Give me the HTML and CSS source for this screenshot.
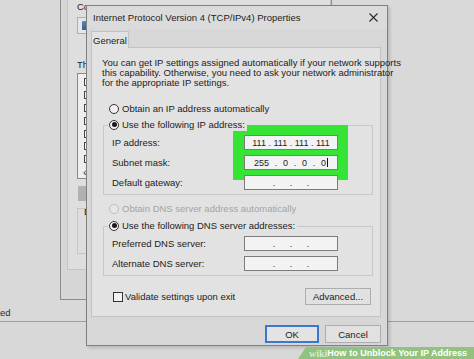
FILE: index.html
```html
<!DOCTYPE html>
<html>
<head>
<meta charset="utf-8">
<link rel="stylesheet" href="styles.css">
</head>
<body>
<div class="desktop">
  <div class="win-back">
    <div class="back-status"><span>ed</span></div>
  </div>

  <div class="win-eth">
    <div class="eth-panel">
      <div class="eth-label"><span>Co</span></div>
      <div class="eth-adapter"><span class="adapter-icon"></span></div>
      <div class="eth-label eth-label-items"><span>Th</span></div>
      <div class="eth-list">
        <div class="eth-row"><span class="mini-check on"></span></div>
        <div class="eth-row"><span class="mini-check on"></span></div>
        <div class="eth-row"><span class="mini-check on"></span></div>
        <div class="eth-row"><span class="mini-check on"></span></div>
        <div class="eth-row"><span class="mini-check"></span></div>
        <div class="eth-row"><span class="mini-check on"></span></div>
        <div class="eth-row"><span class="mini-check on"></span></div>
        <div class="eth-row eth-scroll">&lsaquo;</div>
      </div>
      <div class="eth-btn"></div>
      <div class="eth-desc"><span class="eth-desc-label">D</span></div>
    </div>
  </div>

  <div class="dialog">
    <div class="titlebar">
      <span class="title">Internet Protocol Version 4 (TCP/IPv4) Properties</span>
      <svg class="close" width="9" height="9" viewBox="0 0 9 9"><path d="M0.5 0.5L8.5 8.5M8.5 0.5L0.5 8.5" stroke="#2b2b2b" stroke-width="1.1" fill="none"/></svg>
    </div>
    <div class="dialog-body">
      <div class="tabs"><div class="tab">General</div></div>
      <div class="panel">
        <p class="intro">You can get IP settings assigned automatically if your network supports<br>this capability. Otherwise, you need to ask your network administrator<br>for the appropriate IP settings.</p>

        <div class="radio radio-first"><span class="circle"></span><span>Obtain an IP address automatically</span></div>
        <div class="radio radio-label"><span class="circle checked"></span><span>Use the following IP address:</span></div>
        <div class="group group-ip">
          <div class="highlight"></div>
          <div class="field"><span>IP address:</span><div class="ipbox front"><span>111</span><span>.</span><span>111</span><span>.</span><span>111</span><span>.</span><span>111</span></div></div>
          <div class="field"><span>Subnet mask:</span><div class="ipbox front"><span>255</span><span>.</span><span>0</span><span>.</span><span>0</span><span>.</span><span>0<i class="caret"></i></span></div></div>
          <div class="field"><span>Default gateway:</span><div class="ipbox"><span></span><span>.</span><span>.</span><span>.</span><span></span></div></div>
        </div>

        <div class="radio radio-disabled"><span class="circle"></span><span>Obtain DNS server address automatically</span></div>
        <div class="radio radio-label radio-dns"><span class="circle checked"></span><span>Use the following DNS server addresses:</span></div>
        <div class="group group-dns">
          <div class="field"><span>Preferred DNS server:</span><div class="ipbox"><span></span><span>.</span><span>.</span><span>.</span><span></span></div></div>
          <div class="field"><span>Alternate DNS server:</span><div class="ipbox"><span></span><span>.</span><span>.</span><span>.</span><span></span></div></div>
        </div>

        <div class="panel-foot">
          <div class="check-row"><span class="checkbox"></span><span>Validate settings upon exit</span></div>
          <div class="btn btn-adv">Advanced...</div>
        </div>
      </div>
      <div class="dialog-foot">
        <div class="btn btn-ok">OK</div>
        <div class="btn btn-cancel">Cancel</div>
      </div>
    </div>
  </div>

  <div class="wiki-banner"><span class="wiki">wiki</span><span class="how">How</span><span class="rest">to Unblock Your IP Address</span></div>
</div>
</body>
</html>
```
FILE: styles.css
```css
* { box-sizing: border-box; }

body {
  margin: 0;
  width: 474px;
  height: 359px;
  overflow: hidden;
  background: #d8d8d8;
  font-family: "Liberation Sans Narrow", "Liberation Sans", Arial, sans-serif;
  font-size: 9.5px;
  color: #1c1c1c;
}

.desktop {
  position: relative;
  width: 474px;
  height: 359px;
  overflow: hidden;
  background: #d8d8d8;
}

/* background window spanning the screen */
.win-back {
  position: absolute;
  left: -2px;
  top: -2px;
  width: 478px;
  height: 324px;
  border-bottom: 1px solid #9e9e9e;
  background: #d9d9d9;
  display: flex;
  flex-direction: column;
  justify-content: flex-end;
  padding: 0 0 2px 2px;
}

.back-status {
  height: 14px;
  display: flex;
  align-items: center;
  white-space: nowrap;
  color: #2a2a2a;
}

/* ethernet properties window */
.win-eth {
  position: absolute;
  left: 60px;
  top: -12px;
  width: 272px;
  height: 312px;
  border: 1px solid #8c8c8c;
  background: #d6d6d6;
  padding: 0 0 29px 6px;
}

.eth-panel {
  height: 100%;
  border: 1px solid #c4c4c4;
  border-top: none;
  background: #dedede;
  padding: 13px 0 0 9px;
  display: flex;
  flex-direction: column;
  align-items: flex-start;
}

.eth-label {
  line-height: 10px;
  white-space: nowrap;
}

.eth-label-items { margin-top: 26px; }

.eth-adapter {
  margin-top: 5px;
  width: 60px;
  height: 17px;
  border: 1px solid #b0b0b0;
  background: #e6e6e6;
  padding: 3px 0 0 4px;
}

.adapter-icon {
  display: block;
  width: 8px;
  height: 9px;
  background: linear-gradient(#5c86b8, #2f5f96);
  border-radius: 1px;
}

.eth-list {
  margin-top: 3px;
  width: 60px;
  height: 106px;
  border: 1px solid #8a8a8a;
  background: #eeeeee;
  padding: 2px 0 0 6px;
}

.eth-row {
  height: 12.8px;
  display: flex;
  align-items: center;
}

.mini-check {
  width: 8px;
  height: 8px;
  border: 1px solid #444;
  background: #f6f6f6;
  display: flex;
  align-items: center;
  justify-content: center;
}

.mini-check.on::after {
  content: "";
  width: 3px;
  height: 3px;
  background: #222;
}

.eth-scroll {
  font-size: 11px;
  color: #333;
  margin-left: -1px;
}

.eth-btn {
  margin-top: 7px;
  margin-left: 1px;
  width: 60px;
  height: 15px;
  background: #b1b1b1;
}

.eth-desc {
  margin-top: 7px;
  width: 60px;
  height: 46px;
  border: 1px solid #c6c6c6;
}

.eth-desc-label {
  display: block;
  margin: -2px 0 0 6px;
  line-height: 9px;
}

/* main dialog */
.dialog {
  position: absolute;
  left: 86px;
  top: 5px;
  width: 302px;
  height: 341px;
  border: 1px solid #808080;
  background: #d7d7d7;
  box-shadow: 2px 2px 3px rgba(0, 0, 0, 0.15);
  display: flex;
  flex-direction: column;
}

.titlebar {
  height: 23px;
  background: #dbdbdb;
  display: flex;
  align-items: center;
  justify-content: space-between;
  padding: 0 9px 0 6px;
  white-space: nowrap;
}

.close { display: block; }

.dialog-body {
  padding: 2px 6px 0 4px;
  display: flex;
  flex-direction: column;
}

.tabs { display: flex; }

.tab {
  position: relative;
  z-index: 1;
  width: 38px;
  height: 17px;
  margin-bottom: -1px;
  border: 1px solid #c2c2c2;
  border-bottom: none;
  background: #e2e2e2;
  display: flex;
  align-items: center;
  justify-content: center;
}

.panel {
  height: 270px;
  border: 1px solid #c2c2c2;
  background: #e2e2e2;
  padding: 10px 7px 0 11px;
  display: flex;
  flex-direction: column;
  align-items: stretch;
}

.intro {
  margin: 0 0 0 -1px;
  line-height: 10px;
  white-space: nowrap;
}

.radio {
  position: relative;
  z-index: 1;
  align-self: flex-start;
  height: 13px;
  margin-left: 5px;
  padding: 0 2px 0 1px;
  display: flex;
  align-items: center;
  gap: 3px;
  background: #e2e2e2;
  white-space: nowrap;
}

.radio-first { margin-top: 14px; }
.radio-label { margin-top: 3px; }
.radio-disabled { margin-top: 7px; color: #a4a4a4; }
.radio-dns { margin-top: 4px; }

.circle {
  width: 10px;
  height: 10px;
  border: 1px solid #333;
  border-radius: 50%;
  background: #f2f2f2;
  display: flex;
  align-items: center;
  justify-content: center;
}

.radio-disabled .circle { border-color: #bdbdbd; background: #e6e6e6; }

.circle.checked::after {
  content: "";
  width: 5px;
  height: 5px;
  border-radius: 50%;
  background: #1a1a1a;
}

.group {
  position: relative;
  margin-top: -6px;
  border: 1px solid #c8c8c8;
  padding: 9px 34px 0 8px;
  display: flex;
  flex-direction: column;
  gap: 5px;
}

.group-ip { height: 70px; }
.group-dns { height: 50px; }

.highlight {
  position: absolute;
  left: 129px;
  top: -1px;
  width: 115px;
  height: 55px;
  background: #36e436;
}

.field {
  height: 15px;
  display: flex;
  align-items: center;
  justify-content: space-between;
  white-space: nowrap;
}

.ipbox {
  position: relative;
  z-index: 1;
  width: 94px;
  height: 15px;
  border: 1px solid #7c7c7c;
  background: #f3f3f3;
  display: flex;
  align-items: center;
  justify-content: space-around;
  padding: 0 6px;
  font-size: 9px;
}

.caret {
  display: inline-block;
  width: 1px;
  height: 9px;
  background: #111;
  vertical-align: -1px;
  margin-left: 1px;
}

.panel-foot {
  margin-top: 12px;
  height: 17px;
  display: flex;
  align-items: center;
  justify-content: space-between;
  padding: 0 2px 0 10px;
}

.check-row {
  display: flex;
  align-items: center;
  gap: 2px;
  white-space: nowrap;
}

.checkbox {
  width: 10px;
  height: 10px;
  border: 1px solid #333;
  background: #f2f2f2;
}

.btn {
  height: 17px;
  border: 1px solid #adadad;
  background: #e1e1e1;
  display: flex;
  align-items: center;
  justify-content: center;
  white-space: nowrap;
}

.btn-adv { width: 66px; }

.dialog-foot {
  margin-top: 8px;
  display: flex;
  justify-content: flex-end;
  gap: 6px;
}

.btn-ok {
  width: 54px;
  height: 18px;
  border: 2px solid #3b79cf;
  background: #e3e3e3;
}

.btn-cancel {
  width: 56px;
  height: 18px;
}

/* wikiHow caption */
.wiki-banner {
  position: absolute;
  left: 298px;
  bottom: 0;
  width: 176px;
  height: 12px;
  background: #92c27f;
  clip-path: polygon(8px 0, 100% 0, 100% 100%, 0 100%);
  padding-left: 11px;
  display: flex;
  align-items: center;
  font-family: "Liberation Sans", Arial, sans-serif;
  font-weight: bold;
  font-size: 9px;
  color: #ffffff;
  white-space: nowrap;
}

.wiki {
  font-family: "Liberation Serif", serif;
  color: #d5ebca;
  font-size: 10px;
}

.how { margin-right: 3px; }
```
